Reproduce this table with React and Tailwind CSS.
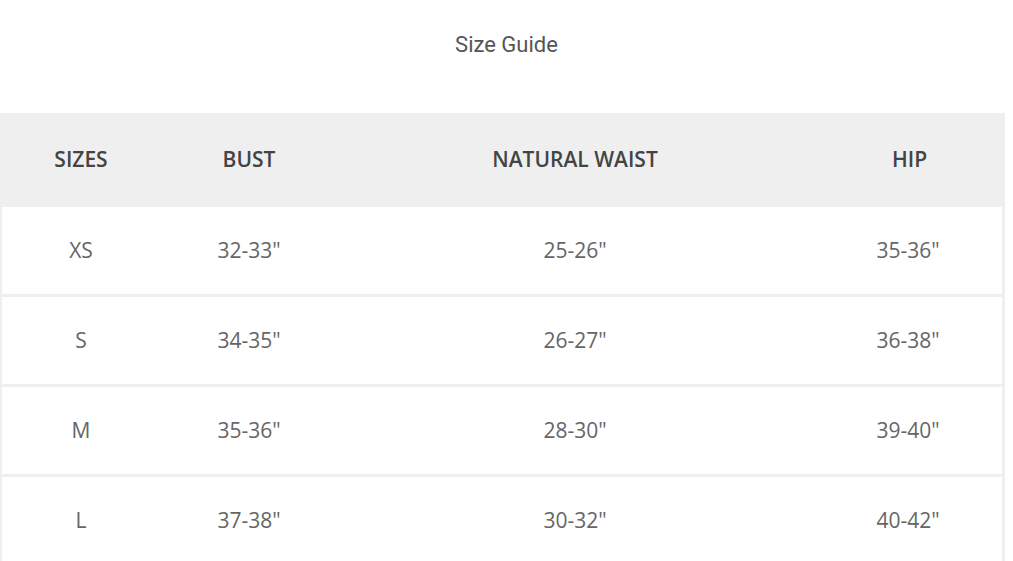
const rows = [
  ['XS', '32-33"', '25-26"', '35-36"'],
  ['S', '34-35"', '26-27"', '36-38"'],
  ['M', '35-36"', '28-30"', '39-40"'],
  ['L', '37-38"', '30-32"', '40-42"'],
];

const cols = ['w-[162px]', 'w-[174px]', 'w-[478px]', 'flex-1'];

export default function App() {
  return (
    <div className="w-[1013px] h-[561px] overflow-hidden bg-white">
      <h2 className="h-[113px] pt-[28px] text-center text-[22px] text-[#555] font-['Roboto',sans-serif]">
        Size Guide
      </h2>
      <div className="w-[1005px] font-['Open_Sans',sans-serif] text-[21px] text-[#666]">
        <div className="flex h-[94px] items-center bg-[#efefef] font-semibold text-[#444]">
          {['SIZES', 'BUST', 'NATURAL WAIST', 'HIP'].map((h, i) => (
            <div key={h} className={`${cols[i]} text-center`}>{h}</div>
          ))}
        </div>
        <div className="border-l-2 border-r-[3px] border-[#efefef]">
          {rows.map((r) => (
            <div key={r[0]} className="flex h-[90px] items-center border-b-[3px] border-[#efefef]">
              {r.map((c, i) => (
                <div key={i} className={`${cols[i]} text-center ${i === 0 ? '-ml-[2px]' : ''}`}>{c}</div>
              ))}
            </div>
          ))}
        </div>
      </div>
    </div>
  );
}
